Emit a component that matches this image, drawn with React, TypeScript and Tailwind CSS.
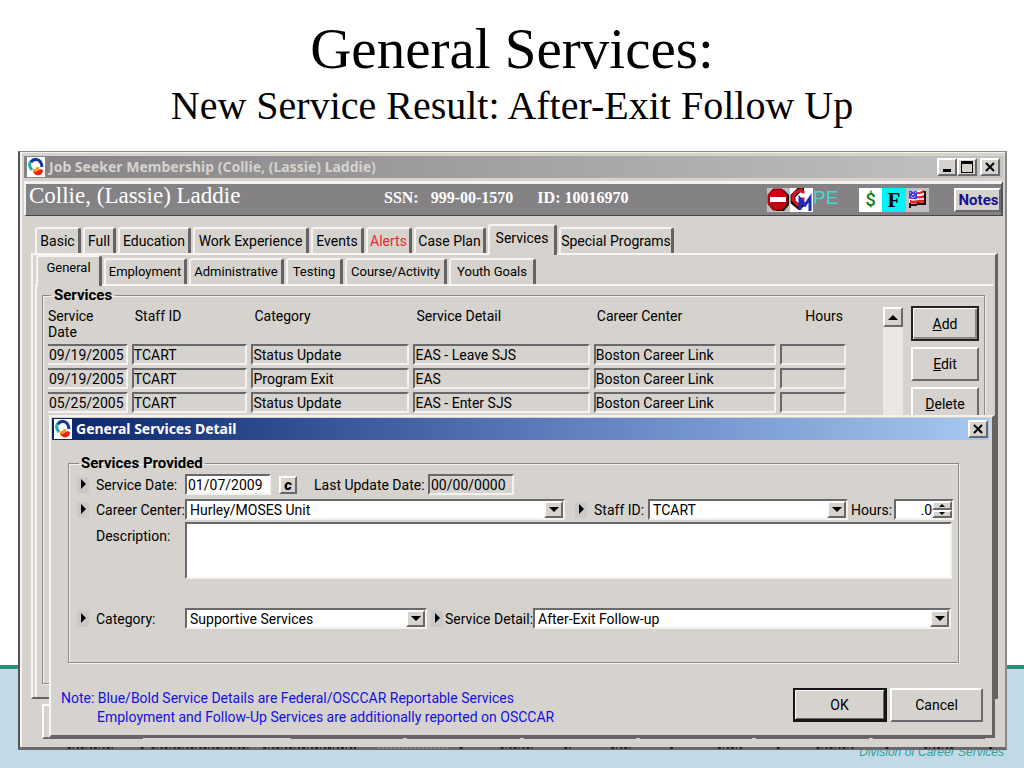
import React from 'react';

interface TabItem {
  label: string;
  width: string;
  active?: boolean;
  alert?: boolean;
}

const MAIN_TABS: TabItem[] = [
  { label: 'Basic', width: 'w-[46px]' },
  { label: 'Full', width: 'w-[33px]' },
  { label: 'Education', width: 'w-[73px]' },
  { label: 'Work Experience', width: 'w-[116px]' },
  { label: 'Events', width: 'w-[53px]' },
  { label: 'Alerts', width: 'w-[46px]', alert: true },
  { label: 'Case Plan', width: 'w-[72px]' },
  { label: 'Services', width: 'w-[69px]', active: true },
  { label: 'Special Programs', width: 'w-[115px]' },
];

const SUB_TABS: TabItem[] = [
  { label: 'General', width: 'w-[66px]', active: true },
  { label: 'Employment', width: 'w-[83px]' },
  { label: 'Administrative', width: 'w-[95px]' },
  { label: 'Testing', width: 'w-[57px]' },
  { label: 'Course/Activity', width: 'w-[102px]' },
  { label: 'Youth Goals', width: 'w-[87px]' },
];

const COLUMNS = [
  { label: 'Service Date', width: 'w-[10.5%]', align: 'text-left' },
  { label: 'Staff ID', width: 'w-[15%]', align: 'text-left' },
  { label: 'Category', width: 'w-[20.3%]', align: 'text-left' },
  { label: 'Service Detail', width: 'w-[22.6%]', align: 'text-left' },
  { label: 'Career Center', width: 'w-[23.3%]', align: 'text-left' },
  { label: 'Hours', width: 'w-[8.3%]', align: 'text-right' },
];

const ROWS = [
  ['09/19/2005', 'TCART', 'Status Update', 'EAS - Leave SJS', 'Boston Career Link', ''],
  ['09/19/2005', 'TCART', 'Program Exit', 'EAS', 'Boston Career Link', ''],
  ['05/25/2005', 'TCART', 'Status Update', 'EAS - Enter SJS', 'Boston Career Link', ''],
];

const RAISED = 'border-2 border-t-white border-l-white border-r-[#6b686b] border-b-[#6b686b] bg-[#d6d3ce]';
const SUNKEN = 'border-2 border-t-[#6b686b] border-l-[#6b686b] border-r-[#f4f2ee] border-b-[#f4f2ee]';

const AppIcon: React.FC = () => (
  <svg viewBox="0 0 18 20" className="h-5 w-[18px] shrink-0">
    <rect width="18" height="20" fill="#fff" />
    <path d="M4 4C2 7 2 10 5 13" fill="none" stroke="#27aaa8" strokeWidth="3" />
    <path d="M4 5C7 1 14 1 15 10" fill="none" stroke="#12349c" strokeWidth="3" />
    <path d="M6 14c1 6 10 6 10-1l-3-1-3 2Z" fill="#ed2217" />
    <path d="M6 13c2 1 4 1 5-3" fill="none" stroke="#f79a1c" strokeWidth="3" />
  </svg>
);

const StopIcon: React.FC = () => (
  <svg viewBox="0 0 23 24" className="h-6 w-[23px]">
    <rect width="23" height="24" fill="#c3c0c3" />
    <path d="M8 2h9l5 5v10l-5 6H9l-4-4Z" fill="#111" />
    <path d="M6 1h9l5 6v9l-5 6H6l-5-6V7Z" fill="#c50010" stroke="#860008" />
    <rect x="3" y="9" width="16" height="5" fill="#fff" />
  </svg>
);

const GmIcon: React.FC = () => (
  <svg viewBox="0 0 23 24" className="h-6 w-[23px]">
    <rect width="23" height="24" fill="#fff" />
    <path d="m14 2-5 0-6 6v6l6 5 4-3" fill="none" stroke="#111" strokeWidth="5" />
    <path d="M14 5 11 2 6 4 3 8v4l5 5 5-2v-4H9" fill="none" stroke="#e31320" strokeWidth="3" />
    <path d="M10 22V11l5 6 5-7v13" fill="none" stroke="#172dc0" strokeWidth="3" />
  </svg>
);

const FlagIcon: React.FC = () => (
  <svg viewBox="0 0 23 24" className="h-6 w-[23px]">
    <rect width="23" height="24" fill="#c3c0c3" />
    <path d="M3 3c4-2 5 2 9 0s4 0 6-1v14c-4 1-5-2-8 0s-5 0-7 0Z" fill="#fff" />
    <path d="M11 4c4 1 5-2 7-2v3c-3 0-4 2-7 1Zm0 4c4 1 5-1 7-1v3c-3 0-4 1-7 0ZM4 12c5 2 7-1 14 0v3c-6-1-8 2-14 0Z" fill="#ee1c24" />
    <path d="M3 3c3-1 5 1 8 0v8c-3 1-5-1-8 0Z" fill="#4540df" />
    <path d="m4 4 6 6m0-6-6 6m3-7v8" stroke="#fff" strokeWidth="1" strokeDasharray="1 2" />
    <path d="M19 3v13h-7M4 15v5m1-3h5l3-2" stroke="#111" strokeWidth="2" fill="none" />
  </svg>
);

const Triangle: React.FC<{ up?: boolean; small?: boolean }> = ({ up, small }) => (
  <svg viewBox="0 0 10 5" className={`${small ? 'h-[3px] w-[6px]' : 'h-[5px] w-[10px]'} ${up ? 'rotate-180' : ''}`}>
    <path d="M0 0h10L5 5Z" fill="#000" />
  </svg>
);

const Marker: React.FC = () => (
  <svg viewBox="0 0 12 16" className="h-4 w-3 shrink-0">
    <rect width="12" height="16" fill="#cbc8ca" />
    <path d="M4 2v10l5-5Z" fill="#000" />
  </svg>
);

const CloseGlyph: React.FC = () => (
  <svg viewBox="0 0 12 10" className="h-[10px] w-3">
    <path d="m2 1 8 8m0-8L2 9" stroke="#000" strokeWidth="2" />
  </svg>
);

const Tabs: React.FC<{ items: TabItem[] }> = ({ items }) => (
  <div role="tablist" className="flex h-[29px] items-end gap-[2px] pl-1">
    {items.map((tab) => (
      <button
        key={tab.label}
        type="button"
        role="tab"
        aria-selected={!!tab.active}
        className={`shrink-0 rounded-t-[3px] border-t-2 border-l-2 border-r-[3px] border-t-[#f6f4f1] border-l-[#f6f4f1] border-r-[#666366] bg-[#d6d3ce] whitespace-nowrap ${tab.width} ${
          tab.active ? 'relative z-10 -mb-[2px] h-[31px] pb-[6px]' : 'h-[26px]'
        } ${tab.alert ? 'text-[#f0252b]' : ''}`}
      >
        {tab.label}
      </button>
    ))}
  </div>
);

interface ComboProps {
  id: string;
  value: string;
  className: string;
}

const Combo: React.FC<ComboProps> = ({ id, value, className }) => (
  <div className={`relative h-[21px] bg-white ${SUNKEN} ${className}`}>
    <select id={id} className="block h-full w-full appearance-none pr-5 pl-[3px] leading-4 outline-none">
      <option>{value}</option>
    </select>
    <span className={`pointer-events-none absolute top-0 right-0 flex h-full w-[19px] items-center justify-center ${RAISED}`}>
      <Triangle />
    </span>
  </div>
);

const WindowHeader: React.FC = () => (
  <>
    <div className="flex h-[22px] items-center gap-1 bg-linear-to-r from-[#848284] to-[#c4c3c3] pl-[3px]">
      <AppIcon />
      <h3 className="font-['Noto_Sans'] text-sm font-bold text-[#d6d3ce]">Job Seeker Membership (Collie, (Lassie) Laddie)</h3>
      <div className="ml-auto flex pr-[3px]">
        <button type="button" aria-label="Minimize" className={`flex h-[18px] w-5 items-end justify-center pb-[2px] ${RAISED}`}>
          <span className="h-[3px] w-2 bg-black" />
        </button>
        <button type="button" aria-label="Maximize" className={`flex h-[18px] w-5 items-center justify-center ${RAISED}`}>
          <span className="h-3 w-3 border border-t-[3px] border-black" />
        </button>
        <button type="button" aria-label="Close" className={`ml-[3px] flex h-[18px] w-5 items-center justify-center ${RAISED}`}>
          <CloseGlyph />
        </button>
      </div>
    </div>
    <div className="mt-[3px] flex h-[35px] items-center border-t-[3px] border-r-2 border-b border-l-2 border-t-[#f4f2ee] border-r-[#555] border-b-[#444] border-l-[#f4f2ee] bg-[#848284] font-['Liberation_Serif'] text-white">
      <span className="w-[358px] pb-2 pl-[3px] text-[23px] leading-6">Collie, (Lassie) Laddie</span>
      <span className="pb-[3px] text-base font-bold">SSN:</span>
      <span className="pb-[3px] pl-3 text-base font-bold">999-00-1570</span>
      <span className="pb-[3px] pl-6 text-base font-bold">ID: 10016970</span>
      <div className="ml-auto flex items-center">
        <StopIcon />
        <GmIcon />
        <span className="w-[46px] pb-1 font-['Liberation_Sans'] text-[19px] leading-5 text-[#45d6d6]">PE</span>
        <span className="flex h-6 w-[23px] items-center justify-center bg-white font-['Roboto'] text-lg font-medium text-[#108018]">$</span>
        <span className="flex h-6 w-6 items-center justify-center bg-[#00f4f8] text-[21px] font-bold text-black">F</span>
        <FlagIcon />
        <button type="button" className={`ml-[25px] h-6 w-[47px] overflow-hidden pl-[2px] font-['Roboto'] text-[15px] leading-4 font-bold whitespace-nowrap text-[#18108c] ${RAISED}`}>
          Notes
        </button>
      </div>
    </div>
  </>
);

const ServicesTable: React.FC = () => (
  <table className="w-full table-fixed border-collapse">
    <thead>
      <tr className="h-9 align-top">
        {COLUMNS.map((col) => (
          <th key={col.label} className={`p-0 font-normal ${col.width} ${col.align}`}>
            <div className={col.label === 'Service Date' ? 'w-12 leading-4' : 'px-[3px] leading-4'}>{col.label}</div>
          </th>
        ))}
      </tr>
    </thead>
    <tbody>
      {ROWS.map((row, i) => (
        <tr key={i} className="h-6 align-top">
          {row.map((cell, j) => (
            <td key={j} className="p-0 pr-1 last:pr-0">
              <div className={`h-[21px] leading-[18px] whitespace-nowrap ${SUNKEN} ${j === 0 ? 'border-l-0 pl-px' : ''}`}>{cell}</div>
            </td>
          ))}
        </tr>
      ))}
    </tbody>
  </table>
);

const ServicesDialog: React.FC = () => (
  <form
    role="dialog"
    aria-label="General Services Detail"
    className="absolute top-[263px] right-[10px] left-[29px] z-20 border-t-2 border-r-[3px] border-b-[3px] border-l-2 border-t-[#f4f2ee] border-r-[#666366] border-b-[#666366] border-l-[#f8f6f3] bg-[#d6d3ce] px-[1px] pt-[1px] pb-2"
  >
    <div className="mr-[2px] flex h-[22px] items-center gap-1 bg-linear-to-r from-[#0a246a] via-[#5877b8] to-[#a6caf0] pl-[2px]">
      <AppIcon />
      <h3 className="font-['Noto_Sans'] text-sm font-bold text-white">General Services Detail</h3>
      <button type="button" aria-label="Close dialog" className={`mr-[1px] ml-auto flex h-[18px] w-5 items-center justify-center ${RAISED}`}>
        <CloseGlyph />
      </button>
    </div>

    <fieldset className="mt-[14px] mr-8 ml-4 min-w-0 border border-[#8a8888] pb-[31px] shadow-[inset_1px_1px_0_#f4f2ee,1px_1px_0_#f4f2ee]">
      <legend className="ml-[10px] px-[2px] text-[15px] leading-[18px] font-bold">Services Provided</legend>
      <div className="flex h-[25px] items-center pl-2">
        <Marker />
        <label htmlFor="service-date" className="w-24 shrink-0 pl-[7px]">Service Date:</label>
        <input id="service-date" defaultValue="01/07/2009" className={`h-[21px] w-[86px] bg-white pl-px ${SUNKEN}`} />
        <button type="button" aria-label="Calendar" className={`ml-2 flex h-[18px] w-[18px] items-center justify-center text-[15px] leading-3 font-black italic ${RAISED}`}>
          c
        </button>
        <label htmlFor="last-update" className="w-[131px] shrink-0 pl-[17px] whitespace-nowrap">Last Update Date:</label>
        <input id="last-update" readOnly value="00/00/0000" className={`h-[21px] w-[86px] bg-transparent pl-px ${SUNKEN}`} />
      </div>
      <div className="flex h-[25px] items-center pr-1 pl-2">
        <Marker />
        <label htmlFor="career-center" className="w-24 shrink-0 pl-[7px] whitespace-nowrap">Career Center:</label>
        <Combo id="career-center" value="Hurley/MOSES Unit" className="min-w-0 flex-1" />
        <span className="ml-[10px] flex">
          <Marker />
        </span>
        <label htmlFor="staff-id" className="w-[61px] pl-[7px] whitespace-nowrap">Staff ID:</label>
        <Combo id="staff-id" value="TCART" className="w-[200px]" />
        <label htmlFor="hours" className="w-[46px] pl-[3px]">Hours:</label>
        <div className={`flex h-[21px] w-[60px] bg-white ${SUNKEN}`}>
          <input id="hours" defaultValue=".0" className="w-0 min-w-0 flex-1 bg-transparent text-right outline-none" />
          <div className="flex w-5 flex-col">
            <button type="button" aria-label="Increase hours" className={`flex flex-1 items-center justify-center ${RAISED}`}>
              <Triangle up small />
            </button>
            <button type="button" aria-label="Decrease hours" className={`flex flex-1 items-center justify-center ${RAISED}`}>
              <Triangle small />
            </button>
          </div>
        </div>
      </div>
      <div className="flex pr-[6px] pl-[27px]">
        <label htmlFor="description" className="w-[89px] shrink-0 pt-1">Description:</label>
        <textarea id="description" className={`block h-[57px] min-w-0 flex-1 resize-none bg-white ${SUNKEN}`} />
      </div>
      <div className="mt-[27px] flex h-[25px] items-center pr-[7px] pl-2">
        <Marker />
        <label htmlFor="category" className="w-24 shrink-0 pl-[7px]">Category:</label>
        <Combo id="category" value="Supportive Services" className="w-[242px]" />
        <span className="ml-1 flex">
          <Marker />
        </span>
        <label htmlFor="service-detail" className="w-[90px] pl-[2px] whitespace-nowrap">Service Detail:</label>
        <Combo id="service-detail" value="After-Exit Follow-up" className="min-w-0 flex-1" />
      </div>
    </fieldset>

    <div className="mt-[25px] mr-2 ml-[9px] flex items-start">
      <p className="flex-1 pt-px leading-[19px] text-[#1410e0]">
        Note: Blue/Bold Service Details are Federal/OSCCAR Reportable Services
        <br />
        <span className="pl-9">Employment and Follow-Up Services are additionally reported on OSCCAR</span>
      </p>
      <button type="submit" className="h-[34px] w-[94px] border-2 border-r-[3px] border-b-[3px] border-[#151515] shadow-[inset_1px_1px_0_#fff,inset_-1px_-1px_0_#6b686b]">
        OK
      </button>
      <button type="button" className={`ml-[3px] h-[34px] w-[93px] ${RAISED}`}>Cancel</button>
    </div>
  </form>
);

const MembershipWindow: React.FC = () => (
  <main className="relative mr-[17px] ml-[18px] border-t border-r-2 border-b-[3px] border-l-2 border-t-[#8a8888] border-r-[#8a8888] border-b-[#6b686b] border-l-[#55525a] bg-[#d6d3ce] font-['Roboto'] text-sm text-black">
    <div className="border-t border-l-2 border-[#f4f2ee] pt-[3px] pr-[2px] pb-2 pl-[2px]">
      <WindowHeader />
      <div className="mt-2 mr-[5px] ml-[7px]">
        <Tabs items={MAIN_TABS} />
        <div className="border-t-2 border-r-[3px] border-b-2 border-l-2 border-t-[#f8f6f3] border-r-[#666366] border-b-[#666366] border-l-[#f8f6f3] pl-[2px]">
          <div className="-ml-[3px] text-[13px]">
            <Tabs items={SUB_TABS} />
          </div>
          <div className="mr-[2px] border-t-2 border-l-2 border-[#f8f6f3] pb-[13px]">
            <fieldset className="mr-2 ml-[5px] min-h-[398px] min-w-0 border border-[#8a8888] shadow-[inset_1px_1px_0_#f4f2ee,1px_1px_0_#f4f2ee]">
              <legend className="ml-2 px-[3px] text-[15px] leading-[18px] font-bold">Services</legend>
              <div className="flex items-start pt-1 pr-[5px] pl-[5px]">
                <div className="min-w-0 flex-1 pr-[37px]">
                  <ServicesTable />
                </div>
                <div className="-mt-px h-[110px] w-5 bg-[#eae8e6]">
                  <button type="button" aria-label="Scroll up" className={`flex h-5 w-5 items-center justify-center ${RAISED}`}>
                    <Triangle up />
                  </button>
                </div>
                <div className="-mt-[2px] ml-2 flex w-[68px] flex-col gap-[6px]">
                  <button type="button" className="h-[35px] border-2 border-[#222] shadow-[inset_1px_1px_0_#fff,inset_-2px_-2px_0_#8a8888]">
                    <u>A</u>dd
                  </button>
                  <button type="button" className={`h-[34px] ${RAISED}`}>
                    <u>E</u>dit
                  </button>
                  <button type="button" className={`h-[34px] ${RAISED}`}>
                    <u>D</u>elete
                  </button>
                </div>
              </div>
            </fieldset>
          </div>
        </div>
      </div>
      <div className="mt-[5px] mr-[18px] ml-[18px] flex h-[35px] gap-[3px]">
        <div className={`mr-[144px] w-[101px] ${RAISED}`} />
        {[0, 1, 2, 3, 4, 5].map((n) => (
          <div key={n} className={`flex-1 ${RAISED}`} />
        ))}
      </div>
    </div>
    <ServicesDialog />
    {/* tops of the next row, cut off by the window edge */}
    <svg viewBox="0 0 988 2" preserveAspectRatio="none" className="absolute top-full left-0 h-[2px] w-full">
      <path
        d="M48 1H96M121 1h3M132 1h97M244 1h93M441 1h4M482 1h32M546 1h8M593 1h20M652 1h4M700 1h24M759 1h3M799 1h38M868 1h3M907 1h30M972 1h3"
        stroke="#222"
        strokeWidth="2"
        strokeDasharray="3 2 1 3 2 2"
      />
      <path d="M359 1h71" stroke="#888" strokeWidth="2" strokeDasharray="2 2" />
    </svg>
  </main>
);

export default function App() {
  return (
    <div className="relative isolate min-h-screen overflow-hidden bg-white">
      <footer className="absolute inset-x-0 bottom-0 -z-10 flex h-[103px] items-end justify-end border-t-4 border-[#289074] bg-[#c2d9e8] pr-5 pb-2">
        <span className="font-['Liberation_Sans'] text-xs leading-4 text-[#30a394] italic">Division of Career Services</span>
      </footer>
      <header className="pt-4 pb-[21px] text-center font-['Liberation_Serif'] text-black">
        <h1 className="text-[57px] leading-[66px]">General Services:</h1>
        <h2 className="text-[40px] leading-[48px]">New Service Result: After-Exit Follow Up</h2>
      </header>
      <MembershipWindow />
    </div>
  );
}
